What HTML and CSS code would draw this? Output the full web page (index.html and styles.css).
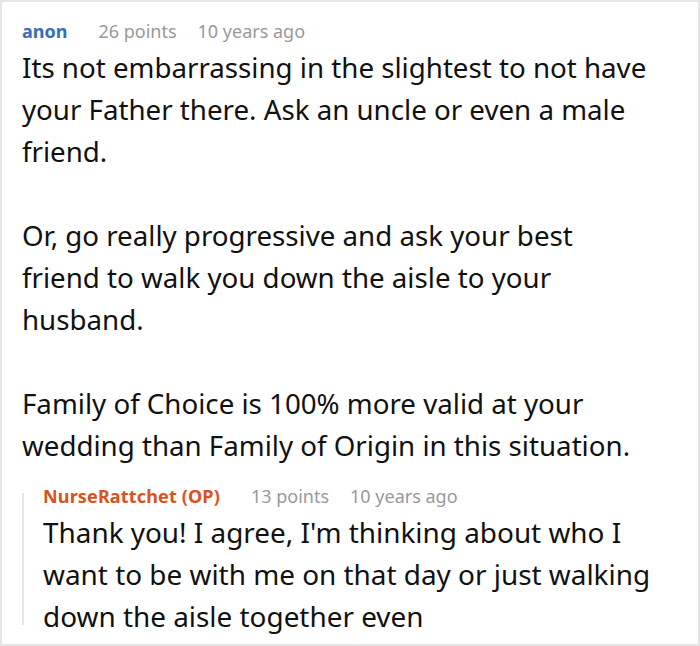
FILE: index.html
```html
<!DOCTYPE html>
<html>
<head>
<meta charset="utf-8">
<link rel="stylesheet" href="styles.css">
</head>
<body>
<div class="card">
  <div class="comment">
    <div class="meta">
      <span class="author">anon</span>
      <span class="points">26 points</span>
      <span class="time">10 years ago</span>
    </div>
    <div class="body">
      <p>Its not embarrassing in the slightest to not have your Father there. Ask an uncle or even a male friend.</p>
      <p>Or, go really progressive and ask your best friend to walk you down the aisle to your husband.</p>
      <p>Family of Choice is 100% more valid at your wedding than Family of Origin in this situation.</p>
    </div>
    <div class="reply">
      <div class="meta">
        <span class="author op">NurseRattchet (OP)</span>
        <span class="points">13 points</span>
        <span class="time">10 years ago</span>
      </div>
      <div class="body">
        <p>Thank you! I agree, I'm thinking about who I want to be with me on that day or just walking down the aisle together even</p>
      </div>
    </div>
  </div>
</div>
</body>
</html>
```

FILE: styles.css
```css
* { box-sizing: border-box; }
html, body { margin: 0; padding: 0; background: #fff; }
body { font-family: "Noto Sans", sans-serif; color: #111; }
.card {
  width: 700px;
  height: 646px;
  border: 2px solid #e6e6e6;
  overflow: hidden;
}
.comment { padding: 16px 44px 0 20px; }
.meta {
  display: flex;
  align-items: baseline;
  font-size: 18px;
  line-height: 26px;
  margin-bottom: 2px;
  color: #999;
}
.author { font-weight: 700; color: #3a6db5; margin-right: 31px; }
.author.op { color: #d8531d; letter-spacing: 0.15px; }
.points { margin-right: 21px; }
.body { font-size: 27.7px; line-height: 42px; }
.body p { margin: 0 0 42px 0; }
.body p:last-child { margin-bottom: 0; }
.reply {
  margin-top: 17px;
  margin-right: -24px;
  padding-left: 21px;
  background: linear-gradient(#e6e6e6, #e6e6e6) 0 10px / 2px calc(100% - 22px) no-repeat;
}
.reply .meta { margin-bottom: 2px; }
.reply .body { font-size: 27.9px; }
```
